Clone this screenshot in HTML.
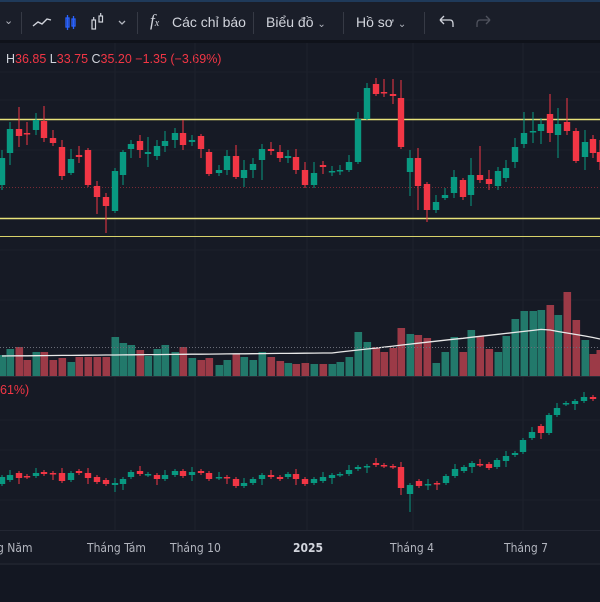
<!DOCTYPE html>
<html><head><meta charset="utf-8"><style>
html,body{margin:0;padding:0;background:#161a25;width:600px;height:600px;overflow:hidden;font-family:"Liberation Sans",sans-serif}
#tb{position:absolute;left:0;top:0;width:600px;height:40px;background:#1a1e29;border-top:2px solid #1f3a5a;box-sizing:border-box}
.t{position:absolute;top:12px;color:#d1d4dc;font-size:14px}
.sep{position:absolute;top:10px;width:1px;height:22px;background:#363a45}
.ax{position:absolute;top:541px;color:#b2b5be;font-size:12px;font-family:"DejaVu Sans Condensed","Liberation Sans",sans-serif}
</style></head><body>
<div id="tb">
<div class="t" style="left:4px;font-size:11px;color:#b2b5be">⌄</div>
<div class="sep" style="left:21px"></div>
<svg style="position:absolute;left:30px;top:10px" width="110" height="22">
<path d="M3 14 L8 10 L12 12 L17 7 L21 8" stroke="#d1d4dc" stroke-width="1.4" fill="none"/>
<g stroke="#2962ff" stroke-width="1.3" fill="none"><rect x="36" y="6" width="3" height="9"/><line x1="37.5" y1="3" x2="37.5" y2="18"/><rect x="42" y="7" width="3" height="7"/><line x1="43.5" y1="4" x2="43.5" y2="17"/></g>
<g stroke="#d1d4dc" stroke-width="1.2" fill="none"><rect x="62" y="8" width="3.5" height="9"/><line x1="63.7" y1="5" x2="63.7" y2="8"/><rect x="69" y="4" width="3.5" height="6"/><line x1="70.7" y1="1" x2="70.7" y2="4"/></g>
<path d="M89 9 L92 12 L95 9" stroke="#b2b5be" stroke-width="1.3" fill="none"/>
</svg>
<div class="sep" style="left:137px"></div>
<div class="t" style="left:150px;font-family:'Liberation Serif',serif;font-size:17px;top:9px;font-style:italic">f<span style="font-size:10px">x</span></div>
<div class="t" style="left:172px">Các chỉ báo</div>
<div class="sep" style="left:253px"></div>
<div class="t" style="left:266px">Biểu đồ <span style="font-size:10px;color:#b2b5be">⌄</span></div>
<div class="sep" style="left:343px"></div>
<div class="t" style="left:356px">Hồ sơ <span style="font-size:10px;color:#b2b5be">⌄</span></div>
<div class="sep" style="left:424px"></div>
<svg style="position:absolute;left:436px;top:12px" width="60" height="18"><path d="M4 6 L14 6 Q17 6 17 10 L17 13 M4 6 L8 2 M4 6 L8 10" stroke="#d1d4dc" stroke-width="1.3" fill="none"/><path d="M54 6 L44 6 Q41 6 41 10 L41 13 M54 6 L50 2 M54 6 L50 10" stroke="#50535e" stroke-width="1.3" fill="none"/></svg>
</div>
<div style="position:absolute;left:0;top:40px;width:600px;height:3px;background:#0f121a"></div>
<div style="position:absolute;left:6px;top:52px;font-size:12.5px;color:#d1d4dc">H<span style="color:#f23645">36.85</span> L<span style="color:#f23645">33.75</span> C<span style="color:#f23645">35.20</span> <span style="color:#f23645">−1.35 (−3.69%)</span></div>
<div style="position:absolute;left:0;top:383px;font-size:12.5px;color:#f23645">61%)</div>
<svg id="s" style="position:absolute;left:0;top:0" width="600" height="600"></svg>
<div style="position:absolute;left:0;top:530px;width:600px;height:1px;background:#232733"></div>
<div style="position:absolute;left:0;top:563px;width:600px;height:37px;background:#131722;border-top:2px solid #1e222d"></div>
<div class="ax" style="left:-3px">g Năm</div>
<div class="ax" style="left:87px">Tháng Tám</div>
<div class="ax" style="left:170px">Tháng 10</div>
<div class="ax" style="left:293px;font-weight:bold;color:#d1d4dc">2025</div>
<div class="ax" style="left:390px">Tháng 4</div>
<div class="ax" style="left:504px">Tháng 7</div>
<script>
var NS="http://www.w3.org/2000/svg",s=document.getElementById("s");
function el(t,a){var e=document.createElementNS(NS,t);for(var k in a)e.setAttribute(k,a[k]);s.appendChild(e);return e}
// grid
[115,195,307,413,523].forEach(function(x){el("line",{x1:x,y1:43,x2:x,y2:530,stroke:"#1e222d"})});
[72,100,150,250,300,420,450,500].forEach(function(y){el("line",{x1:0,y1:y,x2:600,y2:y,stroke:"#1c202b"})});
el("line",{x1:0,y1:376.5,x2:600,y2:376.5,stroke:"#2a2e39"});
// main candles [x,open,close,high,low]
var M=[[2,185,158,150,190],[10,153,129,122,165],[19,129,136,107,147],[27,133,134,122,145],[36,130,120,113,135],[44,121,138,106,142],[53,138,143,130,146],[62,147,176,140,180],[71,173,159,149,175],[79,155,157,146,163],[88,150,185,148,187],[97,186,197,181,214],[106,197,206,193,233],[115,211,171,168,213],[123,175,152,150,185],[131,149,144,140,158],[140,141,150,135,158],[148,154,152,137,167],[157,156,146,140,160],[165,146,141,131,152],[175,140,133,128,148],[183,133,145,120,150],[192,142,140,135,146],[201,136,149,134,158],[209,152,174,149,176],[219,173,170,165,176],[227,170,156,150,175],[236,156,177,145,179],[244,178,170,160,187],[253,170,164,158,178],[262,160,149,144,180],[271,149,151,142,155],[280,152,158,145,162],[288,158,156,150,163],[296,157,170,149,174],[305,170,185,162,188],[314,185,173,162,188],[323,165,167,161,174],[332,171,171,166,176],[340,171,170,165,175],[349,170,162,155,172],[358,162,119,112,164],[367,119,88,83,120],[376,84,94,78,96],[384,92,93,79,97],[393,94,96,79,104],[401,98,147,80,149],[410,172,158,150,196],[418,158,186,148,210],[427,184,210,182,222],[436,210,202,195,213],[445,198,195,188,200],[454,193,177,170,198],[463,180,197,178,200],[471,195,175,158,206],[480,175,180,146,183],[489,179,184,170,190],[498,186,171,167,190],[506,178,168,160,182],[515,162,147,138,168],[524,144,133,112,148],[533,131,131,112,143],[541,131,124,118,144],[550,114,133,94,142],[558,135,124,108,158],[567,122,131,98,135],[576,131,161,128,163],[585,157,142,130,170],[593,139,153,135,158],[600,152,162,140,170]];
var V=[355,349,347,360,352,352,360,358,362,357,357,357,357,337,343,345,350,356,349,345,352,347,358,360,358,365,360,354,357,360,352,357,361,363,364,363,364,364,364,362,357,332,342,347,352,348,328,334,335,338,363,352,337,352,330,336,349,352,336,319,311,311,310,305,315,292,320,340,354];
var G="#089981",R="#f23645";
// volume
M.forEach(function(c,i){var v=V[i]||350;var up=c[2]<=c[1];el("rect",{x:c[0]-3.5,y:v,width:7.6,height:376-v,fill:up?"#22796b":"#9c3a47"})});
var ma="";M.forEach(function(c,i){var y=356-i*0.08-(i>38?(i-38)*0.9:0);if(i>62)y=330+(i-63)*1.5;ma+=(i?"L":"M")+c[0]+" "+y.toFixed(1)});
el("path",{d:ma,stroke:"#e8e8e8","stroke-width":1.3,fill:"none"});
el("line",{x1:0,y1:347.5,x2:600,y2:347.5,stroke:"#6a6d78","stroke-dasharray":"1 2"});
// lines
el("line",{x1:0,y1:187.5,x2:600,y2:187.5,stroke:"#7a2a35","stroke-dasharray":"1 2"});
el("line",{x1:0,y1:119.5,x2:600,y2:119.5,stroke:"#e8e27a","stroke-width":1.6});
el("line",{x1:0,y1:218.5,x2:600,y2:218.5,stroke:"#e8e27a","stroke-width":1.6});
el("line",{x1:0,y1:236.5,x2:600,y2:236.5,stroke:"#d8d26a","stroke-width":1});
function cd(c,w){var up=c[2]<=c[1],col=up?G:R;el("line",{x1:c[0],y1:c[3],x2:c[0],y2:c[4],stroke:col,"stroke-width":1});var t=Math.min(c[1],c[2]),h=Math.max(Math.abs(c[1]-c[2]),1.5);el("rect",{x:c[0]-w/2,y:t,width:w,height:h,fill:col})}
M.forEach(function(c){cd(c,6.4)});
// lower pane [x,open,close]
var L=[[2,484,477],[10,480,475],[19,473,478],[27,476,477],[36,476,473],[44,472,474],[53,473,474],[62,473,481],[71,480,473],[79,471,473],[88,473,478],[97,477,482],[106,480,484],[115,485,483],[123,484,479],[131,477,472],[140,471,474],[148,475,474],[157,475,479],[165,479,475],[175,475,471],[183,471,476],[192,475,472],[201,471,473],[209,473,479],[219,478,477],[227,477,478],[236,479,486],[244,486,483],[253,483,479],[262,479,475],[271,475,477],[280,477,479],[288,477,474],[296,474,479],[305,479,484],[314,483,479],[323,481,477],[332,478,475],[340,475,474],[349,474,470],[358,469,467],[367,467,466],[376,463,465],[384,465,466],[393,466,467],[401,467,488],[410,494,485],[419,481,486],[428,485,484],[437,483,484],[446,483,476],[455,476,469],[464,471,467],[472,467,463],[480,464,465],[489,464,468],[497,467,460],[506,461,456],[515,455,453],[523,452,440],[532,438,432],[541,426,433],[549,433,415],[557,415,408],[566,404,403],[575,404,401],[584,401,397],[593,397,399]];
L.forEach(function(c,i){var hi=Math.min(c[1],c[2])-(i%3==1?5:2),lo=Math.max(c[1],c[2])+(i%4==2?6:2);if(c[0]==410)lo=512;if(c[0]==115)lo=492;if(c[0]==401)lo=495;if(c[0]==428)lo=490;cd([c[0],c[1],c[2],hi,lo],6.4)});
</script>
</body></html>
